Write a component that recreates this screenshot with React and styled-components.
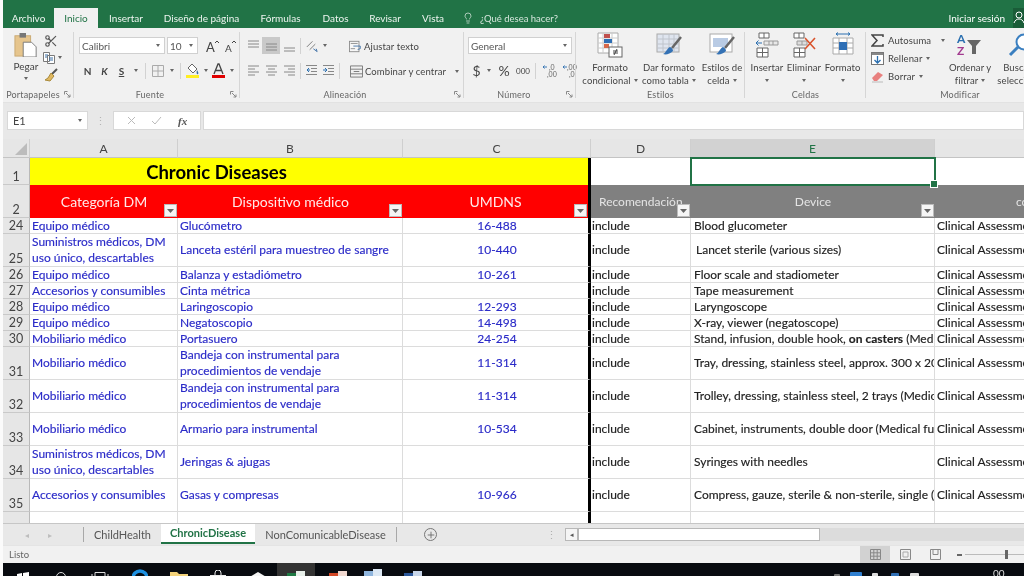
import React from "react";
import styled, { createGlobalStyle } from "styled-components";
import { Scissors, Lightbulb, Plus } from "lucide-react";

const GREEN = "#217346";
const CELL_FONT = `Lato, "Noto Sans", sans-serif`;

const GlobalStyle = createGlobalStyle`
  html, body { margin: 0; padding: 0; background: #fff; overflow: hidden; }
  * { box-sizing: border-box; }
`;

const Page = styled.div`
  width: 1024px;
  height: 576px;
  overflow: hidden;
  padding-left: 3px;
  background: #fbfbfb;
  display: flex;
  flex-direction: column;
  font-family: ${CELL_FONT};
  filter: blur(0.35px);
`;

/* title bar + tabs */
const TitleBar = styled.div`
  height: 28px;
  flex: none;
  background: ${GREEN};
  padding-top: 8px;
  display: flex;
  color: #fff;
  font-size: 10px;
`;
const Tab = styled.div`
  width: ${(p) => p.$w}px;
  flex: none;
  display: flex;
  align-items: center;
  justify-content: center;
  background: ${(p) => (p.$active ? "#f1f1f1" : "transparent")};
  color: ${(p) => (p.$active ? GREEN : "#eef5f0")};
`;
const TellMe = styled.div`
  display: flex;
  align-items: center;
  gap: 6px;
  margin-left: 7px;
  font-size: 9.5px;
  color: #d5e6dc;
`;
const SignIn = styled.div`
  margin-left: auto;
  display: flex;
  align-items: center;
`;
const UserBox = styled.div`
  width: 11px;
  height: 20px;
  margin-left: 8px;
  background: #1a5c38;
  overflow: hidden;
  display: flex;
  align-items: center;
`;

/* ribbon */
const Ribbon = styled.div`
  height: 74px;
  flex: none;
  background: #f1f1f1;
  display: flex;
  overflow: hidden;
  color: #444;
  font-size: 10px;
`;
const Group = styled.div`
  width: ${(p) => p.$w}px;
  flex: none;
  display: flex;
  flex-direction: column;
  position: relative;
  padding: 4px 0 1px;
  &::after {
    content: "";
    position: absolute;
    right: 0;
    top: 4px;
    bottom: 4px;
    width: 1px;
    background: #d6d6d6;
  }
`;
const GroupBody = styled.div`
  flex: 1;
  display: flex;
  min-height: 0;
  padding-left: ${(p) => p.$pad || 0}px;
`;
const GroupLabel = styled.div`
  height: 13px;
  font-size: 9px;
  line-height: 13px;
  color: #666;
  text-align: center;
  position: relative;
  letter-spacing: 0.2px;
  padding-right: ${(p) => p.$pr || 0}px;
  padding-left: ${(p) => p.$pl || 0}px;
`;
const Launcher = styled.svg`
  position: absolute;
  right: 3px;
  top: 3px;
  width: 7px;
  height: 7px;
`;
const Stack = styled.div`
  display: flex;
  flex-direction: column;
  gap: ${(p) => p.$gap ?? 8}px;
  padding-top: ${(p) => p.$top ?? 5}px;
  margin-top: ${(p) => p.$mt || 0}px;
`;
const ToolRow = styled.div`
  display: flex;
  align-items: center;
  height: 17px;
`;
const Slot = styled.div`
  width: ${(p) => p.$w}px;
  height: 17px;
  flex: none;
  display: flex;
  align-items: center;
  justify-content: center;
  background: ${(p) => (p.$on ? "#c9c9c9" : "transparent")};
  font-size: ${(p) => p.$fs || 10}px;
  font-weight: ${(p) => (p.$bold ? 700 : 400)};
  font-style: ${(p) => (p.$italic ? "italic" : "normal")};
  text-decoration: ${(p) => (p.$under ? "underline" : "none")};
  color: #444;
`;
const Divider = styled.div`
  width: 1px;
  height: 16px;
  flex: none;
  background: #d2d2d2;
  margin: 0 ${(p) => p.$m ?? 3}px;
`;
const Caret = styled.span`
  display: inline-block;
  width: 0;
  height: 0;
  border-left: 2.5px solid transparent;
  border-right: 2.5px solid transparent;
  border-top: 3px solid #666;
  flex: none;
  margin-left: ${(p) => p.$ml || 0}px;
  margin-top: ${(p) => p.$mt || 0}px;
`;
const SelectBox = styled.div`
  width: ${(p) => p.$w}px;
  height: 17px;
  flex: none;
  margin-right: ${(p) => p.$mr || 0}px;
  background: #fff;
  border: 1px solid #d0d0d0;
  display: flex;
  align-items: center;
  justify-content: space-between;
  padding: 0 4px 0 2px;
  font-size: 10px;
  color: #555;
`;
const PasteButton = styled.div`
  width: 28px;
  flex: none;
  display: flex;
  flex-direction: column;
  align-items: center;
  padding-top: 1px;
  line-height: 13px;
  & > svg {
    margin-bottom: 3px;
  }
`;
const BigButton = styled.div`
  width: ${(p) => p.$w}px;
  flex: none;
  margin-left: ${(p) => p.$ml || 0}px;
  display: flex;
  flex-direction: column;
  align-items: center;
  line-height: 13px;
  font-size: 9.5px;
  letter-spacing: 0.1px;
  color: #444;
  white-space: nowrap;
  & > svg {
    margin-bottom: 3px;
    flex: none;
  }
`;
const LineWithCaret = styled.div`
  display: flex;
  align-items: center;
  gap: 3px;
  height: 13px;
`;
const TextTool = styled.div`
  display: flex;
  align-items: center;
  gap: ${(p) => p.$gap ?? 4}px;
  height: ${(p) => p.$h || 18}px;
  padding-top: ${(p) => p.$pt || 0}px;
  margin-left: ${(p) => p.$ml || 0}px;
  font-size: 9.5px;
  letter-spacing: 0.1px;
  color: #444;
  white-space: nowrap;
`;

/* formula bar */
const FormulaBar = styled.div`
  height: 37px;
  flex: none;
  background: #e8e8e8;
  border-top: 1px solid #e2e2e2;
  padding: 8px 0 0 4px;
  display: flex;
  align-items: flex-start;
`;
const FieldBox = styled.div`
  height: 19px;
  width: ${(p) => p.$w}px;
  flex: ${(p) => (p.$grow ? 1 : "none")};
  background: #fff;
  border: 1px solid #d8d8d8;
  display: flex;
  align-items: center;
  justify-content: ${(p) => p.$justify || "flex-start"};
  padding: 0 5px;
  font-size: 11px;
  color: #444;
  margin-right: ${(p) => p.$mr || 0}px;
`;
const FxLabel = styled.i`
  font-family: "Liberation Serif", serif;
  font-weight: 700;
  color: #555;
`;
const Grip = styled.div`
  width: 25px;
  flex: none;
  text-align: center;
  color: #b5b5b5;
  font-size: 11px;
  line-height: 19px;
`;

/* sheet */
const Sheet = styled.div`
  height: 384px;
  flex: none;
  overflow: hidden;
  background: #fff;
  font-family: ${CELL_FONT};
`;
const Row = styled.div`
  display: grid;
  grid-template-columns: 27px 148px 225px 188px 100px 244px 200px;
  height: ${(p) => p.$h}px;
`;
const ColHead = styled.div`
  background: ${(p) => (p.$sel ? "#d2d2d2" : "#e6e6e6")};
  color: ${(p) => (p.$sel ? GREEN : "#444")};
  border-right: 1px solid #cfcfcf;
  border-bottom: 1px solid ${(p) => (p.$sel ? GREEN : "#c4c4c4")};
  font-size: 12px;
  display: flex;
  align-items: center;
  justify-content: center;
`;
const Corner = styled(ColHead)`
  position: relative;
  &::after {
    content: "";
    position: absolute;
    right: 2px;
    bottom: 2px;
    border-left: 12px solid transparent;
    border-bottom: 12px solid #bcbcbc;
  }
`;
const RowNum = styled.div`
  background: #e6e6e6;
  color: #444;
  border-right: 1px solid #b9b9b9;
  border-bottom: 1px solid #c9c9c9;
  font-size: 12.5px;
  line-height: 15px;
  display: flex;
  align-items: flex-end;
  justify-content: center;
`;
const Cell = styled.div`
  border-right: 1px solid #dcdcdc;
  border-bottom: 1px solid #dcdcdc;
  display: flex;
  align-items: center;
  overflow: hidden;
  white-space: nowrap;
  font-size: 12px;
  line-height: 16px;
  padding-top: ${(p) => (p.$short ? 1 : 0)}px;
  padding-left: ${(p) => p.$pad ?? 2}px;
  color: ${(p) => p.$color || "#222"};
  -webkit-text-stroke: 0.15px currentColor;
  justify-content: ${(p) => (p.$center ? "center" : "flex-start")};
`;
const DivCell = styled(Cell)`
  border-right: 3px solid #000;
`;
const WrapText = styled.span`
  white-space: normal;
`;
const TitleCell = styled.div`
  grid-column: span 2;
  background: #ffff00;
  color: #000;
  font-weight: 700;
  font-size: 18.5px;
  display: flex;
  align-items: center;
  justify-content: center;
`;
const YellowCell = styled.div`
  background: #ffff00;
  border-right: 3px solid #000;
`;
const BlankCell = styled.div`
  background: #fff;
  position: relative;
`;
const SelectedCell = styled(BlankCell)`
  outline: 2px solid ${GREEN};
  outline-offset: -1px;
  z-index: 2;
  &::after {
    content: "";
    position: absolute;
    right: -3px;
    bottom: -3px;
    width: 6px;
    height: 6px;
    background: ${GREEN};
    border: 1px solid #fff;
  }
`;
const HeadCell = styled.div`
  position: relative;
  background: ${(p) => (p.$gray ? "#808080" : "#ff0000")};
  color: ${(p) => (p.$gray ? "#e4e4e4" : "#ffe9e9")};
  font-size: ${(p) => (p.$gray ? 12 : 14)}px;
  display: flex;
  align-items: center;
  overflow: hidden;
  white-space: nowrap;
  justify-content: ${(p) => (p.$left ? "flex-start" : "center")};
  padding-left: ${(p) => p.$pad || 0}px;
`;
const DivHead = styled(HeadCell)`
  border-right: 3px solid #000;
`;
const FilterBtn = styled.div`
  position: absolute;
  right: 1px;
  bottom: 1px;
  width: 13px;
  height: 13px;
  background: #f5f5f5;
  border: 1px solid #bbb;
  display: flex;
  align-items: center;
  justify-content: center;
`;

/* sheet tabs */
const TabBar = styled.div`
  height: 22px;
  flex: none;
  background: #e8e8e8;
  border-top: 1px solid #c6c6c6;
  display: flex;
  align-items: center;
  font-size: 11px;
  color: #555;
`;
const NavArrow = styled.div`
  width: 23px;
  flex: none;
  text-align: center;
  font-size: 8px;
  color: #bdbdbd;
  margin-left: ${(p) => p.$ml || 0}px;
`;
const BarSep = styled.div`
  width: 1px;
  height: 15px;
  flex: none;
  background: #a8a8a8;
  margin-left: ${(p) => p.$ml || 0}px;
`;
const SheetTab = styled.div`
  width: ${(p) => p.$w}px;
  height: ${(p) => (p.$active ? "20px" : "auto")};
  margin-top: ${(p) => (p.$active ? "-2px" : 0)};
  flex: none;
  display: flex;
  align-items: center;
  justify-content: center;
  white-space: nowrap;
  background: ${(p) => (p.$active ? "#fff" : "transparent")};
  color: ${(p) => (p.$active ? GREEN : "#555")};
  font-weight: ${(p) => (p.$active ? 700 : 400)};
  border-bottom: ${(p) => (p.$active ? `2px solid ${GREEN}` : "none")};
`;
const AddSheet = styled.div`
  width: 13px;
  height: 13px;
  flex: none;
  margin-left: 27px;
  border: 1px solid #777;
  border-radius: 50%;
  display: flex;
  align-items: center;
  justify-content: center;
`;
const ScrollGrip = styled.div`
  margin-left: 108px;
  width: 13px;
  flex: none;
  text-align: center;
  color: #b0b0b0;
  line-height: 12px;
`;
const ScrollTrack = styled.div`
  flex: 1;
  height: 13px;
  margin-left: 7px;
  background: #dcdcdc;
  display: flex;
`;
const ScrollLeft = styled.div`
  width: 13px;
  background: #f5f5f5;
  border: 1px solid #b8b8b8;
  display: flex;
  align-items: center;
  justify-content: center;
  font-size: 7px;
  color: #555;
`;
const ScrollThumb = styled.div`
  width: 242px;
  background: #fff;
  border: 1px solid #b8b8b8;
`;

/* status bar */
const StatusBar = styled.div`
  height: 18px;
  flex: none;
  background: #f1f1f1;
  display: flex;
  align-items: center;
  padding-left: 6px;
  font-size: 9.5px;
  color: #666;
  border-top: 1px solid #e4e4e4;
`;
const ViewBtn = styled.div`
  width: 30px;
  height: 17px;
  flex: none;
  display: flex;
  align-items: center;
  justify-content: center;
  margin-left: ${(p) => p.$ml || 0}px;
  background: ${(p) => (p.$on ? "#d2d2d2" : "transparent")};
`;
const ZoomMinus = styled.div`
  width: 5px;
  height: 2px;
  flex: none;
  background: #666;
  margin-left: 7px;
`;
const ZoomLine = styled.div`
  flex: 1;
  height: 1px;
  margin-left: 3px;
  background: #bbb;
  position: relative;
`;
const ZoomThumb = styled.div`
  position: absolute;
  left: 40px;
  top: -4px;
  width: 3px;
  height: 9px;
  background: #666;
`;

/* taskbar */
const Taskbar = styled.div`
  height: 13px;
  flex: none;
  background: #080b10;
  display: flex;
  overflow: hidden;
  color: #fff;
`;
const TaskSlot = styled.div`
  width: ${(p) => p.$w}px;
  flex: none;
  height: 30px;
  display: flex;
  justify-content: center;
  padding-top: ${(p) => p.$top ?? 8}px;
  background: ${(p) => (p.$active ? "#333" : "transparent")};
`;
const Clock = styled.div`
  font-size: 10px;
  line-height: 13px;
  padding-top: 4px;
  margin-left: 9px;
  color: #ddd;
  white-space: nowrap;
`;

/* ---- icons ---- */
const LauncherIcon = () => (
  <Launcher viewBox="0 0 7 7">
    <path d="M.5.5h3M.5.5v3M2 2l4 4M6 3.5V6H3.5" stroke="#888" fill="none" />
  </Launcher>
);

const PasteIcon = () => (
  <svg width="24" height="24" viewBox="0 0 26 26">
    <rect x="1" y="3" width="17" height="22" fill="#e6c58d" stroke="#c9a870" />
    <rect x="6" y="0" width="7" height="5" fill="#777" />
    <path d="M10 10h9l5 5v11H10z" fill="#fff" stroke="#777" />
  </svg>
);
const CopyIcon = () => (
  <svg width="14" height="14" viewBox="0 0 14 14">
    <path d="M1.5 1.5h6v9h-6zM5.5 4.5h7v8h-7z" fill="#fff" stroke="#7a7a7a" />
    <path d="M3 4h3M3 6h2M7 7h4M7 9h4" stroke="#3b6ea5" />
  </svg>
);
const BrushIcon = () => (
  <svg width="14" height="14" viewBox="0 0 14 14">
    <path d="M13 1L8 6" stroke="#555" strokeWidth="2" />
    <path d="M7 5l3 3-4 5-5-1 3-2z" fill="#e0b860" stroke="#a98a3c" />
  </svg>
);
const GrowA = ({ small }) => (
  <svg width="14" height="14" viewBox="0 0 14 14">
    <text x={small ? 2 : 1} y="12.5" fontSize={small ? 10 : 13} fill="#444" fontFamily="Lato">A</text>
    <path d={small ? "M9 4l2-2 2 2" : "M10 4l2-2 2 2"} stroke="#444" fill="none" />
  </svg>
);
const BorderIcon = () => (
  <svg width="12" height="12" viewBox="0 0 12 12">
    <path d="M.5.5h11v11H.5zM6 .5v11M.5 6h11" stroke="#aaa" fill="none" />
  </svg>
);
const FillIcon = () => (
  <svg width="15" height="15" viewBox="0 0 15 15">
    <path d="M7 1l5 5-4 4-5-5z" fill="#fff" stroke="#666" />
    <path d="M12 7c1 2 2 3 1 4s-2-1-1-4z" fill="#3b6ea5" />
    <rect x="1" y="12" width="13" height="3" fill="#ffee22" />
  </svg>
);
const FontColorIcon = () => (
  <svg width="15" height="15" viewBox="0 0 15 15">
    <path d="M3 11L7 1h1l4 10M5 7.500h5" stroke="#444" strokeWidth="1.3" fill="none" />
    <rect x="1" y="12" width="13" height="3" fill="#e00000" />
  </svg>
);
const AlignV = ({ y }) => (
  <svg width="13" height="13" viewBox="0 0 13 13">
    <path d={`M1 ${y}h11M1 ${y + 3}h11`} stroke="#888" />
    {y > 8 ? null : <path d={`M1 ${y + 6}h11`} stroke="#888" />}
  </svg>
);
const AlignH = ({ kind }) => {
  const short = { l: "M1 5h7M1 11h7", c: "M3 5h7M3 11h7", r: "M5 5h7M5 11h7" }[kind];
  return (
    <svg width="13" height="13" viewBox="0 0 13 13">
      <path d="M1 2h11M1 8h11" stroke="#888" />
      <path d={short} stroke="#888" />
    </svg>
  );
};
const OrientIcon = () => (
  <svg width="14" height="14" viewBox="0 0 15 14">
    <path d="M2 8l6-6M5 11l6-6" stroke="#777" />
    <path d="M9 10l4 3M13 13l-1-3" stroke="#3b6ea5" fill="none" />
  </svg>
);
const WrapIcon = () => (
  <svg width="13" height="13" viewBox="0 0 15 13">
    <rect x=".5" y=".5" width="11" height="12" fill="#f7f7f7" stroke="#888" />
    <path d="M2 3h8M2 9h5" stroke="#888" />
    <path d="M5 6h8v3l-3 1" stroke="#3b6ea5" fill="none" />
  </svg>
);
const MergeIcon = () => (
  <svg width="13" height="13" viewBox="0 0 14 13">
    <path d="M.5.5h13v12H.5zM.5 4h13M.5 9h13M4 6.500h6" stroke="#777" fill="none" />
  </svg>
);
const IndentIcon = ({ flip }) => (
  <svg width="13" height="13" viewBox="0 0 13 13">
    <path d="M1 1.500h11M6 4.500h6M6 7.500h6M1 10.500h11" stroke="#888" />
    <path d={flip ? "M1 6h3M3 4l2 2-2 2" : "M5 6H2M4 4L2 6l2 2"} stroke="#2a6fb0" fill="none" />
  </svg>
);
const DecimalIcon = ({ flip }) => (
  <svg width="17" height="14" viewBox="0 0 17 14">
    <text x={flip ? 5 : 7} y="6" fontSize="7" fill="#666" fontFamily="Lato">{flip ? ",00" : ",0"}</text>
    <text x={flip ? 7 : 5} y="13" fontSize="7" fill="#666" fontFamily="Lato">{flip ? ",0" : ",00"}</text>
    <path d="M1 3h4M2.500 1.500L1 3l1.500 1.500" stroke="#3b78b5" fill="none" />
  </svg>
);
const CondIcon = () => (
  <svg width="26" height="26" viewBox="0 0 26 26">
    <path d="M1 1h20v20H1z" fill="#fff" stroke="#aaa" />
    <path d="M1 6h20M1 11h20M1 16h20M6 1v20M15 1v20" stroke="#ccc" />
    <rect x="7" y="2" width="6" height="4" fill="#c0504d" />
    <rect x="7" y="7" width="8" height="4" fill="#2f6fb5" />
    <rect x="7" y="12" width="5" height="4" fill="#d8694a" />
    <rect x="12" y="15" width="13" height="10" fill="#fff" stroke="#666" />
    <path d="M16 19h5M16 21h5M20 17l-3 6" stroke="#444" />
  </svg>
);
const TableFmtIcon = () => (
  <svg width="26" height="26" viewBox="0 0 26 26">
    <rect x="1" y="2" width="22" height="18" fill="#dfe5ef" stroke="#aaa" />
    <path d="M1 7h22M1 12h22M1 16h22M7 2v18M13 2v18M18 2v18" stroke="#bfc4cc" />
    <path d="M25 5l-9 11" stroke="#666" strokeWidth="2.5" />
    <path d="M14 15c2 1 3 2 3 4-3 3-7 4-10 3 3-1 4-6 7-7z" fill="#3472b5" />
  </svg>
);
const CellStyleIcon = () => (
  <svg width="26" height="26" viewBox="0 0 26 26">
    <rect x="1" y="2" width="22" height="18" fill="#fff" stroke="#aaa" />
    <rect x="4" y="6" width="15" height="9" fill="#b9cbe4" />
    <path d="M25 5l-9 11" stroke="#666" strokeWidth="2.5" />
    <path d="M14 15c2 1 3 2 3 4-3 3-7 4-10 3 3-1 4-6 7-7z" fill="#3472b5" />
  </svg>
);
const InsertIcon = () => (
  <svg width="24" height="26" viewBox="0 0 24 26">
    <path d="M4 1h10v5H4zM9 1v5M2 16h11v9H2zM7.500 16v9M2 20.500h11" stroke="#666" fill="#fff" />
    <path d="M9 9h14v4H9zM14 9v4M18 9v4" stroke="#999" fill="#e8e8e8" />
    <path d="M7 11H1M3.500 8.500L1 11l2.500 2.500" stroke="#2a6fb0" fill="none" />
  </svg>
);
const DeleteIcon = () => (
  <svg width="24" height="26" viewBox="0 0 24 26">
    <path d="M2 1h10v5H2zM7 1v5M2 16h11v9H2zM7.500 16v9M2 20.500h11" stroke="#666" fill="#fff" />
    <path d="M5 9h10v4H5zM10 9v4" stroke="#999" fill="#ddd" />
    <path d="M13 6l10 11M23 6L13 17" stroke="#d9532c" strokeWidth="1.6" />
  </svg>
);
const FormatIcon = () => (
  <svg width="24" height="26" viewBox="0 0 24 26">
    <path d="M2 6h20v16H2zM2 11h20M2 16h20M8 6v16M16 6v16" stroke="#aaa" fill="#fff" />
    <rect x="8" y="10" width="8" height="8" fill="#2f6fb5" />
    <path d="M5 2h14M5 2l2-1.500M5 2l2 1.500M19 2l-2-1.500M19 2l-2 1.500" stroke="#2a6fb0" fill="none" />
  </svg>
);
const SumIcon = () => (
  <svg width="13" height="13" viewBox="0 0 13 13">
    <path d="M12 3V1H1l5 5.500L1 12h11v-2" stroke="#444" strokeWidth="1.500" fill="none" />
  </svg>
);
const FillDownIcon = () => (
  <svg width="13" height="13" viewBox="0 0 13 13">
    <rect x=".5" y=".5" width="12" height="12" fill="#fff" stroke="#777" />
    <rect x="1" y="1" width="11" height="2" fill="#888" />
    <path d="M6.500 4v7M3.500 8l3 3 3-3" stroke="#2a6fb0" strokeWidth="1.3" fill="none" />
  </svg>
);
const EraserIcon = () => (
  <svg width="13" height="13" viewBox="0 0 13 13">
    <path d="M1 8l6-6 5 3-6 6H3z" fill="#e8807f" />
    <path d="M1 12h11" stroke="#bbb" />
  </svg>
);
const SortIcon = () => (
  <svg width="28" height="26" viewBox="0 0 28 26">
    <text x="1" y="11" fontSize="12" fill="#2a6fb0" fontFamily="Lato" fontWeight="700">A</text>
    <text x="1" y="23" fontSize="12" fill="#a23a8f" fontFamily="Lato" fontWeight="700">Z</text>
    <path d="M11 8h14l-5 6v8h-4v-8z" fill="#666" />
  </svg>
);
const FindIcon = () => (
  <svg width="26" height="26" viewBox="0 0 26 26">
    <circle cx="16" cy="10" r="7.500" fill="#fff" stroke="#3a7fc0" strokeWidth="2" />
    <path d="M10 15l-8 8" stroke="#3a7fc0" strokeWidth="3" />
  </svg>
);
const FilterCaret = () => (
  <svg width="7" height="4" viewBox="0 0 7 4">
    <path d="M0 0h7L3.500 4z" fill="#666" />
  </svg>
);
const NormalView = () => (
  <svg width="11" height="11" viewBox="0 0 11 11">
    <path d="M.5.5h10v10H.5zM3.800.5v10M7.200.5v10M.5 3.800h10M.5 7.200h10" stroke="#888" fill="none" />
  </svg>
);
const LayoutView = () => (
  <svg width="11" height="11" viewBox="0 0 11 11">
    <path d="M.5.5h10v10H.5z" stroke="#888" fill="none" />
    <path d="M3 3h5v5H3z" stroke="#aaa" fill="none" />
  </svg>
);
const BreakView = () => (
  <svg width="11" height="11" viewBox="0 0 11 11">
    <path d="M.5.5h10v10H.5zM3 .5v5h5v-5" stroke="#888" fill="none" />
  </svg>
);

const Win = () => (
  <svg width="12" height="12" viewBox="0 0 12 12">
    <path d="M0 2l5-1v5H0zM6 1l6-1v6H6zM0 7h5v4l-5-1zM6 7h6v5l-6-1z" fill="#fff" />
  </svg>
);
const Ring = () => (
  <svg width="14" height="14" viewBox="0 0 14 14">
    <circle cx="7" cy="6" r="4.500" fill="none" stroke="#ddd" />
  </svg>
);
const TaskView = () => (
  <svg width="18" height="14" viewBox="0 0 18 14">
    <path d="M4 1.500h10v9H4zM1 3v6M17 3v6" fill="none" stroke="#ddd" />
  </svg>
);
const EdgeLogo = () => (
  <svg width="16" height="16" viewBox="0 0 16 16">
    <path d="M1 9a7 7 0 0 1 14 0" fill="none" stroke="#1e90e0" strokeWidth="3.500" />
  </svg>
);
const Folder = () => (
  <svg width="18" height="14" viewBox="0 0 18 14">
    <path d="M0 1h7l2 2h9v11H0z" fill="#f3d27a" />
  </svg>
);
const Store = () => (
  <svg width="18" height="16" viewBox="0 0 18 16">
    <path d="M6 5V3a3 3 0 0 1 6 0v2" fill="none" stroke="#eee" />
    <rect x="1" y="5" width="16" height="11" fill="#eee" />
  </svg>
);
const Mail = () => (
  <svg width="20" height="14" viewBox="0 0 20 14">
    <path d="M0 7l10-6 10 6v7H0z" fill="#f5f5f5" />
  </svg>
);
const AppTile = ({ color, accent }) => (
  <svg width="18" height="14" viewBox="0 0 18 14">
    <rect x="0" y="2" width="11" height="12" fill={color} />
    <rect x="9" y="0" width="9" height="14" fill={accent} />
  </svg>
);
const Sliver = ({ color, w = 12 }) => (
  <svg width={w} height="12" viewBox={`0 0 ${w} 12`}>
    <rect x="0" y="1" width={w} height="11" rx="1" fill={color} />
  </svg>
);

/* ---- data ---- */
const BLUE = "#2b2bc8";
const EQ = "Equipo médico";
const AC = "Accesorios y consumibles";
const MO = "Mobiliario médico";
const SU = "Suministros médicos, DM uso único, descartables";
const TRAY = "Bandeja con instrumental para procedimientos de vendaje";

const rows = [
  { n: 24, h: 16, a: EQ, b: "Glucómetro", c: "16-488", e: "Blood glucometer" },
  { n: 25, h: 33, a: SU, b: "Lanceta estéril para muestreo de sangre", c: "10-440", e: "Lancet sterile (various sizes)", ePad: 5 },
  { n: 26, h: 16, a: EQ, b: "Balanza y estadiómetro", c: "10-261", e: "Floor scale and stadiometer" },
  { n: 27, h: 16, a: AC, b: "Cinta métrica", c: "", e: "Tape measurement" },
  { n: 28, h: 16, a: EQ, b: "Laringoscopio", c: "12-293", e: "Laryngoscope" },
  { n: 29, h: 16, a: EQ, b: "Negatoscopio", c: "14-498", e: "X-ray, viewer (negatoscope)" },
  {
    n: 30, h: 16, a: MO, b: "Portasuero", c: "24-254",
    e: <span>Stand, infusion, double hook, <b>on casters</b> (Medical furniture)</span>,
  },
  { n: 31, h: 33, a: MO, b: TRAY, c: "11-314", e: "Tray, dressing, stainless steel, approx. 300 x 200 mm" },
  { n: 32, h: 33, a: MO, b: TRAY, c: "11-314", e: "Trolley, dressing, stainless steel, 2 trays (Medical furniture)" },
  { n: 33, h: 33, a: MO, b: "Armario para instrumental", c: "10-534", e: "Cabinet, instruments, double door (Medical furniture)" },
  { n: 34, h: 33, a: SU, b: "Jeringas & ajugas", c: "", e: "Syringes with needles" },
  { n: 35, h: 33, a: AC, b: "Gasas y compresas", c: "10-966", e: "Compress, gauze, sterile & non-sterile, single (Medical)" },
];

const DataRow = ({ row }) => {
  const short = row.h < 20;
  return (
    <Row $h={row.h}>
      <RowNum>{row.n}</RowNum>
      <Cell $short={short} $color={BLUE}><WrapText>{row.a}</WrapText></Cell>
      <Cell $short={short} $color={BLUE}><WrapText>{row.b}</WrapText></Cell>
      <DivCell $short={short} $color={BLUE} $center $pad={3}>{row.c}</DivCell>
      <Cell $short={short} $pad={1}>include</Cell>
      <Cell $short={short} $pad={row.ePad ?? 3}>{row.e}</Cell>
      <Cell $short={short}>Clinical Assessment</Cell>
    </Row>
  );
};

const App = () => (
  <>
    <GlobalStyle />
    <Page>
      <TitleBar>
        <Tab $w={51}>Archivo</Tab>
        <Tab $w={44} $active>Inicio</Tab>
        <Tab $w={56}>Insertar</Tab>
        <Tab $w={95}>Diseño de página</Tab>
        <Tab $w={63}>Fórmulas</Tab>
        <Tab $w={47}>Datos</Tab>
        <Tab $w={52}>Revisar</Tab>
        <Tab $w={44}>Vista</Tab>
        <TellMe>
          <Lightbulb size={12} strokeWidth={1.5} />
          ¿Qué desea hacer?
        </TellMe>
        <SignIn>
          Iniciar sesión
          <UserBox>
            <svg width="11" height="14" viewBox="0 0 11 14">
              <circle cx="6" cy="4" r="3" fill="none" stroke="#fff" />
              <path d="M1 12c1-3 3-4 5-4s4 1 5 4" fill="none" stroke="#fff" />
            </svg>
          </UserBox>
        </SignIn>
      </TitleBar>

      <Ribbon>
        <Group $w={71}>
          <GroupBody $pad={9}>
            <PasteButton>
              <PasteIcon />
              <span>Pegar</span>
              <Caret $mt={4} />
            </PasteButton>
            <Stack $gap={0} $top={0}>
              <Slot $w={22}><Scissors size={14} color="#555" /></Slot>
              <ToolRow>
                <Slot $w={18}><CopyIcon /></Slot>
                <Caret />
              </ToolRow>
              <Slot $w={22}><BrushIcon /></Slot>
            </Stack>
          </GroupBody>
          <GroupLabel $pr={11}>Portapapeles<LauncherIcon /></GroupLabel>
        </Group>

        <Group $w={166}>
          <GroupBody $pad={5}>
            <Stack>
              <ToolRow>
                <SelectBox $w={86} $mr={2}>Calibri<Caret /></SelectBox>
                <SelectBox $w={31} $mr={4}>10<Caret /></SelectBox>
                <Slot $w={20}><GrowA /></Slot>
                <Slot $w={16}><GrowA small /></Slot>
              </ToolRow>
              <ToolRow>
                <Slot $w={17} $bold>N</Slot>
                <Slot $w={17} $bold $italic>K</Slot>
                <Slot $w={17} $bold $under>S</Slot>
                <Slot $w={12}><Caret /></Slot>
                <Divider $m={3} />
                <Slot $w={17}><BorderIcon /></Slot>
                <Slot $w={11}><Caret /></Slot>
                <Divider $m={3} />
                <Slot $w={17}><FillIcon /></Slot>
                <Slot $w={9}><Caret /></Slot>
                <Slot $w={17}><FontColorIcon /></Slot>
                <Slot $w={9}><Caret /></Slot>
              </ToolRow>
            </Stack>
          </GroupBody>
          <GroupLabel $pr={14}>Fuente<LauncherIcon /></GroupLabel>
        </Group>

        <Group $w={224}>
          <GroupBody $pad={4}>
            <Stack>
              <ToolRow>
                <Slot $w={18}><AlignV y={2} /></Slot>
                <Slot $w={18} $on><AlignV y={5} /></Slot>
                <Slot $w={18}><AlignV y={9} /></Slot>
                <Divider $m={2} />
                <Slot $w={18}><OrientIcon /></Slot>
                <Slot $w={8}><Caret /></Slot>
                <TextTool $gap={2} $ml={20} $h={19} $pt={2}><WrapIcon />Ajustar texto</TextTool>
              </ToolRow>
              <ToolRow>
                <Slot $w={18}><AlignH kind="l" /></Slot>
                <Slot $w={18}><AlignH kind="c" /></Slot>
                <Slot $w={18}><AlignH kind="r" /></Slot>
                <Divider $m={2} />
                <Slot $w={17}><IndentIcon /></Slot>
                <Slot $w={17}><IndentIcon flip /></Slot>
                <Divider $m={2} />
                <TextTool $gap={2} $ml={8} $h={19} $pt={2}>
                  <MergeIcon />Combinar y centrar<Caret $ml={7} />
                </TextTool>
              </ToolRow>
            </Stack>
          </GroupBody>
          <GroupLabel $pr={14}>Alineación<LauncherIcon /></GroupLabel>
        </Group>

        <Group $w={112}>
          <GroupBody $pad={4}>
            <Stack>
              <SelectBox $w={104}>General<Caret /></SelectBox>
              <ToolRow>
                <Slot $w={17} $fs={14}>$</Slot>
                <Slot $w={8}><Caret /></Slot>
                <Slot $w={22} $fs={14}>%</Slot>
                <Slot $w={16} $fs={8}>000</Slot>
                <Divider $m={4} />
                <Slot $w={20}><DecimalIcon /></Slot>
                <Slot $w={20}><DecimalIcon flip /></Slot>
              </ToolRow>
            </Stack>
          </GroupBody>
          <GroupLabel $pr={12}>Número<LauncherIcon /></GroupLabel>
        </Group>

        <Group $w={169}>
          <GroupBody $pad={5}>
            <BigButton $w={58}>
              <CondIcon />
              <span>Formato</span>
              <LineWithCaret>condicional<Caret /></LineWithCaret>
            </BigButton>
            <BigButton $w={60}>
              <TableFmtIcon />
              <span>Dar formato</span>
              <LineWithCaret>como tabla<Caret /></LineWithCaret>
            </BigButton>
            <BigButton $w={46}>
              <CellStyleIcon />
              <span>Estilos de</span>
              <LineWithCaret>celda<Caret /></LineWithCaret>
            </BigButton>
          </GroupBody>
          <GroupLabel>Estilos</GroupLabel>
        </Group>

        <Group $w={121}>
          <GroupBody $pad={4}>
            <BigButton $w={36}>
              <InsertIcon />
              <span>Insertar</span>
              <LineWithCaret><Caret /></LineWithCaret>
            </BigButton>
            <BigButton $w={38}>
              <DeleteIcon />
              <span>Eliminar</span>
              <LineWithCaret><Caret /></LineWithCaret>
            </BigButton>
            <BigButton $w={39}>
              <FormatIcon />
              <span>Formato</span>
              <LineWithCaret><Caret /></LineWithCaret>
            </BigButton>
          </GroupBody>
          <GroupLabel>Celdas</GroupLabel>
        </Group>

        <Group $w={160}>
          <GroupBody $pad={5}>
            <Stack $gap={0} $top={0} $mt={-1}>
              <TextTool><SumIcon />Autosuma<Caret $ml={6} /></TextTool>
              <TextTool><FillDownIcon />Rellenar<Caret /></TextTool>
              <TextTool><EraserIcon />Borrar<Caret /></TextTool>
            </Stack>
            <BigButton $w={46} $ml={2}>
              <SortIcon />
              <span>Ordenar y</span>
              <LineWithCaret>filtrar<Caret /></LineWithCaret>
            </BigButton>
            <BigButton $w={52} $ml={2}>
              <FindIcon />
              <span>Buscar y</span>
              <span>seleccionar</span>
            </BigButton>
          </GroupBody>
          <GroupLabel $pl={28}>Modificar</GroupLabel>
        </Group>
      </Ribbon>

      <FormulaBar>
        <FieldBox $w={81} $justify="space-between">E1<Caret /></FieldBox>
        <Grip>⋮</Grip>
        <FieldBox $w={88} $justify="space-around" $mr={2}>
          <svg width="9" height="9" viewBox="0 0 9 9"><path d="M1 1l7 7M8 1L1 8" stroke="#bbb" /></svg>
          <svg width="11" height="9" viewBox="0 0 11 9"><path d="M1 5l3 3 6-7" stroke="#bbb" fill="none" /></svg>
          <FxLabel>fx</FxLabel>
        </FieldBox>
        <FieldBox $grow />
      </FormulaBar>

      <Sheet>
        <Row $h={19}>
          <Corner />
          <ColHead>A</ColHead>
          <ColHead>B</ColHead>
          <ColHead>C</ColHead>
          <ColHead>D</ColHead>
          <ColHead $sel>E</ColHead>
          <ColHead />
        </Row>
        <Row $h={27}>
          <RowNum>1</RowNum>
          <TitleCell>Chronic Diseases</TitleCell>
          <YellowCell />
          <BlankCell />
          <SelectedCell />
          <BlankCell />
        </Row>
        <Row $h={33}>
          <RowNum>2</RowNum>
          <HeadCell>Categoría DM<FilterBtn><FilterCaret /></FilterBtn></HeadCell>
          <HeadCell>Dispositivo médico<FilterBtn><FilterCaret /></FilterBtn></HeadCell>
          <DivHead>UMDNS<FilterBtn><FilterCaret /></FilterBtn></DivHead>
          <HeadCell $gray $left $pad={8}>Recomendación<FilterBtn><FilterCaret /></FilterBtn></HeadCell>
          <HeadCell $gray>Device<FilterBtn><FilterCaret /></FilterBtn></HeadCell>
          <HeadCell $gray $left $pad={81}>co</HeadCell>
        </Row>
        {rows.map((row) => (
          <DataRow key={row.n} row={row} />
        ))}
        <Row $h={12}>
          <RowNum />
          <Cell />
          <Cell />
          <DivCell />
          <Cell />
          <Cell />
          <Cell />
        </Row>
      </Sheet>

      <TabBar>
        <NavArrow $ml={12}>◂</NavArrow>
        <NavArrow>▸</NavArrow>
        <BarSep $ml={22} />
        <SheetTab $w={77}>ChildHealth</SheetTab>
        <SheetTab $w={94} $active>ChronicDisease</SheetTab>
        <SheetTab $w={141}>NonComunicableDisease</SheetTab>
        <BarSep />
        <AddSheet><Plus size={10} color="#666" /></AddSheet>
        <ScrollGrip>⋮</ScrollGrip>
        <ScrollTrack>
          <ScrollLeft>◂</ScrollLeft>
          <ScrollThumb />
        </ScrollTrack>
      </TabBar>

      <StatusBar>
        Listo
        <ViewBtn $on $ml={831}><NormalView /></ViewBtn>
        <ViewBtn><LayoutView /></ViewBtn>
        <ViewBtn><BreakView /></ViewBtn>
        <ZoomMinus />
        <ZoomLine><ZoomThumb /></ZoomLine>
      </StatusBar>

      <Taskbar>
        <TaskSlot $w={39} $top={9}><Win /></TaskSlot>
        <TaskSlot $w={38}><Ring /></TaskSlot>
        <TaskSlot $w={39}><TaskView /></TaskSlot>
        <TaskSlot $w={41} $top={6}><EdgeLogo /></TaskSlot>
        <TaskSlot $w={37}><Folder /></TaskSlot>
        <TaskSlot $w={41} $top={7}><Store /></TaskSlot>
        <TaskSlot $w={39}><Mail /></TaskSlot>
        <TaskSlot $w={38} $active><AppTile color="#1f7a44" accent="#e8f0ea" /></TaskSlot>
        <TaskSlot $w={45}><AppTile color="#d24726" accent="#f0d8d0" /></TaskSlot>
        <TaskSlot $w={25} $top={6}><AppTile color="#8fb5dd" accent="#dce8f4" /></TaskSlot>
        <TaskSlot $w={55}><AppTile color="#2b579a" accent="#c8d6ea" /></TaskSlot>
        <TaskSlot $w={387} />
        <TaskSlot $w={19} $top={10}><Sliver color="#777" w={6} /></TaskSlot>
        <TaskSlot $w={19}><Sliver color="#2f7fd0" /></TaskSlot>
        <TaskSlot $w={19} $top={9}><Sliver color="#ddd" w={6} /></TaskSlot>
        <TaskSlot $w={21} $top={9}><Sliver color="#2f6fb5" w={8} /></TaskSlot>
        <TaskSlot $w={19} $top={9}><Sliver color="#ddd" w={9} /></TaskSlot>
        <TaskSlot $w={60} />
        <Clock>00</Clock>
      </Taskbar>
    </Page>
  </>
);

export default App;
